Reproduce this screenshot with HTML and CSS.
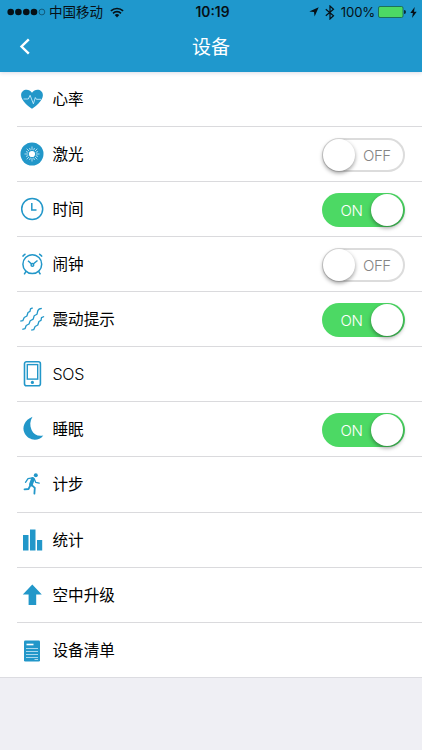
FILE: index.html
```
<!DOCTYPE html>
<html lang="zh-CN">
<head>
<meta charset="utf-8">
<title>设备</title>
<link rel="stylesheet" href="styles.css">
</head>
<body>
<header class="header">
  <div class="status">
    <div class="status-left">
      <svg width="39" height="8" viewBox="0 0 39 8"><g fill="#061016"><circle cx="3.7" cy="4" r="3.3"/><circle cx="11.4" cy="4" r="3.3"/><circle cx="19.3" cy="4" r="3.3"/><circle cx="27" cy="4" r="3.3"/></g><circle cx="34.9" cy="4" r="2.9" fill="none" stroke="#0b4059" stroke-width=".7"/></svg>
      <span class="carrier">中国移动</span>
      <svg class="wifi" width="14" height="11" viewBox="0 0 14 11"><path d="M.9 3.9a9 9 0 0 1 12.2 0M3 6.3a5.8 5.8 0 0 1 8 0" fill="none" stroke="#061016" stroke-width="1.7"/><path d="M4.7 8.1a3.4 3.4 0 0 1 4.6 0L7 10.5z" fill="#061016"/></svg>
    </div>
    <span class="clock">10:19</span>
    <div class="status-right">
      <svg width="10" height="10" viewBox="0 0 10 10"><path d="M9.7.3 5.6 9.5 5 5 .3 4.500z" fill="#061016"/></svg>
      <svg class="bluetooth" width="10" height="15" viewBox="0 0 10 15"><path d="M.8 4.200 8.500 10.800 5 14V1L8.500 4.200.8 10.800" fill="none" stroke="#061016" stroke-width="1.200"/></svg>
      <span class="percent">100%</span>
      <svg class="battery" width="28" height="12" viewBox="0 0 28 12"><rect x=".5" y=".5" width="24.500" height="11" rx="1.500" fill="#4cd964" stroke="#17604a" stroke-width=".8"/><path d="M26 4q2 0 2 2t-2 2z" fill="#0b2b39"/></svg>
      <svg class="bolt" width="7" height="11" viewBox="0 0 7 11"><path d="M4.700 0 .3 6h2.600L2 11l4.700-6.200H4z" fill="#061016"/></svg>
    </div>
  </div>
  <div class="nav">
    <svg class="back" width="12" height="18" viewBox="0 0 12 18"><path d="M9.800 1.300 2.500 8.500 9.800 15.700" fill="none" stroke="#fff" stroke-width="2.400"/></svg>
    <h1 class="title">设备</h1>
  </div>
</header>
<main class="list">
  <div class="row">
    <svg class="icon" viewBox="0 0 24 24"><path d="M12 21.800C8.500 19.500 1.100 13.800 1.100 8.300c0-6.300 7.900-7.300 10.900-2.500 3-4.800 10.900-3.800 10.900 2.500 0 5.500-7.400 11.200-10.900 13.500z" fill="#2297c9"/><path d="M3.500 12h4.800l1.800-3.700 3.300 8.500 1.900-6.300 1.100 1.800h4.600" fill="none" stroke="#c5eafa" stroke-width=".9"/></svg>
    <span class="label">心率</span>
  </div>
  <div class="row">
    <svg class="icon" viewBox="0 0 24 24"><circle cx="12" cy="12" r="11.500" fill="#2297c9"/><g stroke="#d3eefa" stroke-width=".8"><path d="M12 4.500v15M4.500 12h15M6.700 6.700l10.600 10.600M6.700 17.300 17.300 6.700M9.500 6l5 12M14.500 6l-5 12M6 9.500l12 5M6 14.500l12-5"/></g><circle cx="12" cy="12" r="4" fill="#2297c9"/><circle cx="12" cy="12" r="3.100" fill="#fff"/></svg>
    <span class="label">激光</span>
    <div class="switch off"><span class="state">OFF</span><i class="knob"></i></div>
  </div>
  <div class="row">
    <svg class="icon line" viewBox="0 0 24 24"><circle cx="12.200" cy="12" r="10.500"/><path d="M11.800 6v7h4.700"/></svg>
    <span class="label">时间</span>
    <div class="switch on"><span class="state">ON</span><i class="knob"></i></div>
  </div>
  <div class="row">
    <svg class="icon line" viewBox="0 0 24 24"><circle cx="12.300" cy="12.200" r="9.400"/><path d="M2.600 4.700Q3.500 3 5.500 2M22 4.700Q21.100 3 19.100 2M6 19.300l-1.800 3M18.600 19.300l1.800 3"/><path d="m8 8.800 3.600 3.200M13.200 12 17.500 8.500"/><circle cx="12.400" cy="12.900" r="1.300"/></svg>
    <span class="label">闹钟</span>
    <div class="switch off"><span class="state">OFF</span><i class="knob"></i></div>
  </div>
  <div class="row">
    <svg class="icon wave" viewBox="0 0 24 24"><path d="M.3 14.200 2.800 13.700 4.200 10.500 6.900 9 8 5.500 10 4.400 10.500 1.900 12.700.8"/><path d="M2.300 22.300 5 21.700 6.200 18.500 9 17 10.200 13.700 13.200 12.100 14.200 8.700 17 7.200 17.900 3.500 19.200 2 21.800 1.300"/><path d="M11.200 23.200 13.700 22.700 15.100 19.500 17.800 18 18.900 14.500 21 13.400 21.500 10.600 24.100 9.500"/></svg>
    <span class="label">震动提示</span>
    <div class="switch on"><span class="state">ON</span><i class="knob"></i></div>
  </div>
  <div class="row">
    <svg class="icon" viewBox="0 0 24 24"><rect x="4.500" y="-.2" width="15.900" height="24" rx="2" fill="none" stroke="#2297c9" stroke-width="1.600"/><rect x="7.300" y="2.600" width="10.400" height="14.500" fill="none" stroke="#2297c9" stroke-width="1.400"/><circle cx="12.400" cy="20.400" r="1.600" fill="#2297c9"/></svg>
    <span class="label sos">SOS</span>
  </div>
  <div class="row">
    <svg class="icon" viewBox="0 0 24 24"><path d="M12.500-.2C4.500 3.100 1.700 10.100 4.500 16.100c3.500 7.600 14 8.900 18.800 2.300-5.500 1-9.800-1-11.700-5.500-2-4.500-1.700-9 .9-13.100z" fill="#2297c9"/></svg>
    <span class="label">睡眠</span>
    <div class="switch on"><span class="state">ON</span><i class="knob"></i></div>
  </div>
  <div class="row">
    <svg class="icon" viewBox="0 0 24 24"><circle cx="15.800" cy="3.200" r="2" fill="#2297c9"/><g fill="none" stroke="#2297c9" stroke-linecap="round" stroke-linejoin="round"><path d="m12.900 7-2 5.500" stroke-width="3.700"/><path d="M12.500 5.800 8 6.600l-2.500 3.700M14.300 7.100l1.500 3.300 3.400.8" stroke-width="1.300"/><path d="m11.500 12.800 3.300 3-.4 5.800M10.300 13.300 8.500 17l-4 .4" stroke-width="1.800"/></g></svg>
    <span class="label">计步</span>
  </div>
  <div class="row">
    <svg class="icon" viewBox="0 0 24 24"><path d="M3 7h5.500v15.500H3zM10 1.600h5.500v20.900H10zM17 12.100h5.200v10.400H17z" fill="#2297c9"/></svg>
    <span class="label">统计</span>
  </div>
  <div class="row">
    <svg class="icon" viewBox="0 0 24 24"><path d="m12.300 1.500 9.500 10h-5.600v10.600H8.600V11.500H2.800z" fill="#2297c9"/></svg>
    <span class="label">空中升级</span>
  </div>
  <div class="row">
    <svg class="icon" viewBox="0 0 24 24"><rect x="4" y="2.500" width="16" height="21" rx="1.300" fill="#2297c9"/><path d="M6.500 6.500h7" stroke="#fff" stroke-width="1.600"/><path d="M6 10.500h12M6 13.500h12M6 16.500h12M6 19.500h12M14.500 21.500H18" stroke="#b9e0f2" stroke-width=".9"/></svg>
    <span class="label">设备清单</span>
  </div>
</main>
</body>
</html>
```
FILE: styles.css
```
* { box-sizing: border-box; }
body {
  margin: 0;
  min-height: 750px;
  background: #efeff4;
  color: #000;
  font-family: Inter, "Noto Sans CJK SC", sans-serif;
}
svg { display: block; flex: none; }
.header {
  position: relative;
  height: 72px;
  background: #1f98cd;
  box-shadow: 0 1px 4px rgba(80, 90, 140, .22);
}
.status {
  display: grid;
  grid-template-columns: 1fr auto 1fr;
  align-items: center;
  height: 24px;
  padding: 0 5px 0 7px;
  color: #061016;
}
.status-left, .status-right { display: flex; align-items: center; }
.status-right { justify-content: flex-end; }
.carrier { margin-left: 3px; font-size: 13.5px; line-height: 24px; }
.wifi { margin-left: 7px; }
.clock { margin-left: 1px; font-size: 13.8px; font-weight: 600; }
.bluetooth { margin-left: 6px; }
.percent { margin-left: 6px; font-size: 13.2px; letter-spacing: -.2px; }
.battery { margin-left: 3px; }
.bolt { margin-left: 4px; }
.nav {
  display: grid;
  grid-template-columns: 40px 1fr 40px;
  align-items: center;
  height: 46px;
}
.back { margin-left: 19px; }
.title {
  margin: 0;
  padding-top: 1px;
  color: #fff;
  font-size: 19px;
  font-weight: 400;
  line-height: 28px;
  text-align: center;
}
.list { height: 605.5px; background: #fff; border-bottom: 1px solid #dcdce1; }
.row {
  display: flex;
  align-items: center;
  height: 55.07px;
  margin-left: 17px;
  padding: 1px 17px 0 3px;
  border-bottom: 1px solid #dadadd;
}
.row:last-child { border-bottom: 0; }
.icon { width: 24px; height: 24px; margin-bottom: 1px; overflow: visible; }
.line { fill: none; stroke: #2297c9; stroke-width: 1.5; }
.wave { fill: none; stroke: #2297c9; stroke-width: 1.3; stroke-linejoin: round; }
.label { margin-left: 8.5px; padding-top: 1px; font-size: 15.6px; line-height: 24px; }
.sos { padding: 0 0 1px; font-size: 16px; font-weight: 300; letter-spacing: -.3px; }
.switch {
  position: relative;
  display: flex;
  align-items: center;
  width: 83.5px;
  height: 34px;
  margin-left: auto;
  border-radius: 17px;
  font-size: 15px;
  font-weight: 300;
  letter-spacing: -.5px;
}
.state { padding-top: 1px; }
.on { padding-left: 19px; background: #4cd964; color: #fff; }
.off { padding-left: 39.5px; border: 2px solid #dcdcdc; color: #858585; }
.knob {
  position: absolute;
  top: 1px;
  right: 2px;
  width: 32px;
  height: 32px;
  border-radius: 50%;
  background: #fff;
  box-shadow: 0 2px 4px rgba(0, 0, 0, .4);
}
.off .knob { top: -1px; right: auto; left: -1px; }
```
